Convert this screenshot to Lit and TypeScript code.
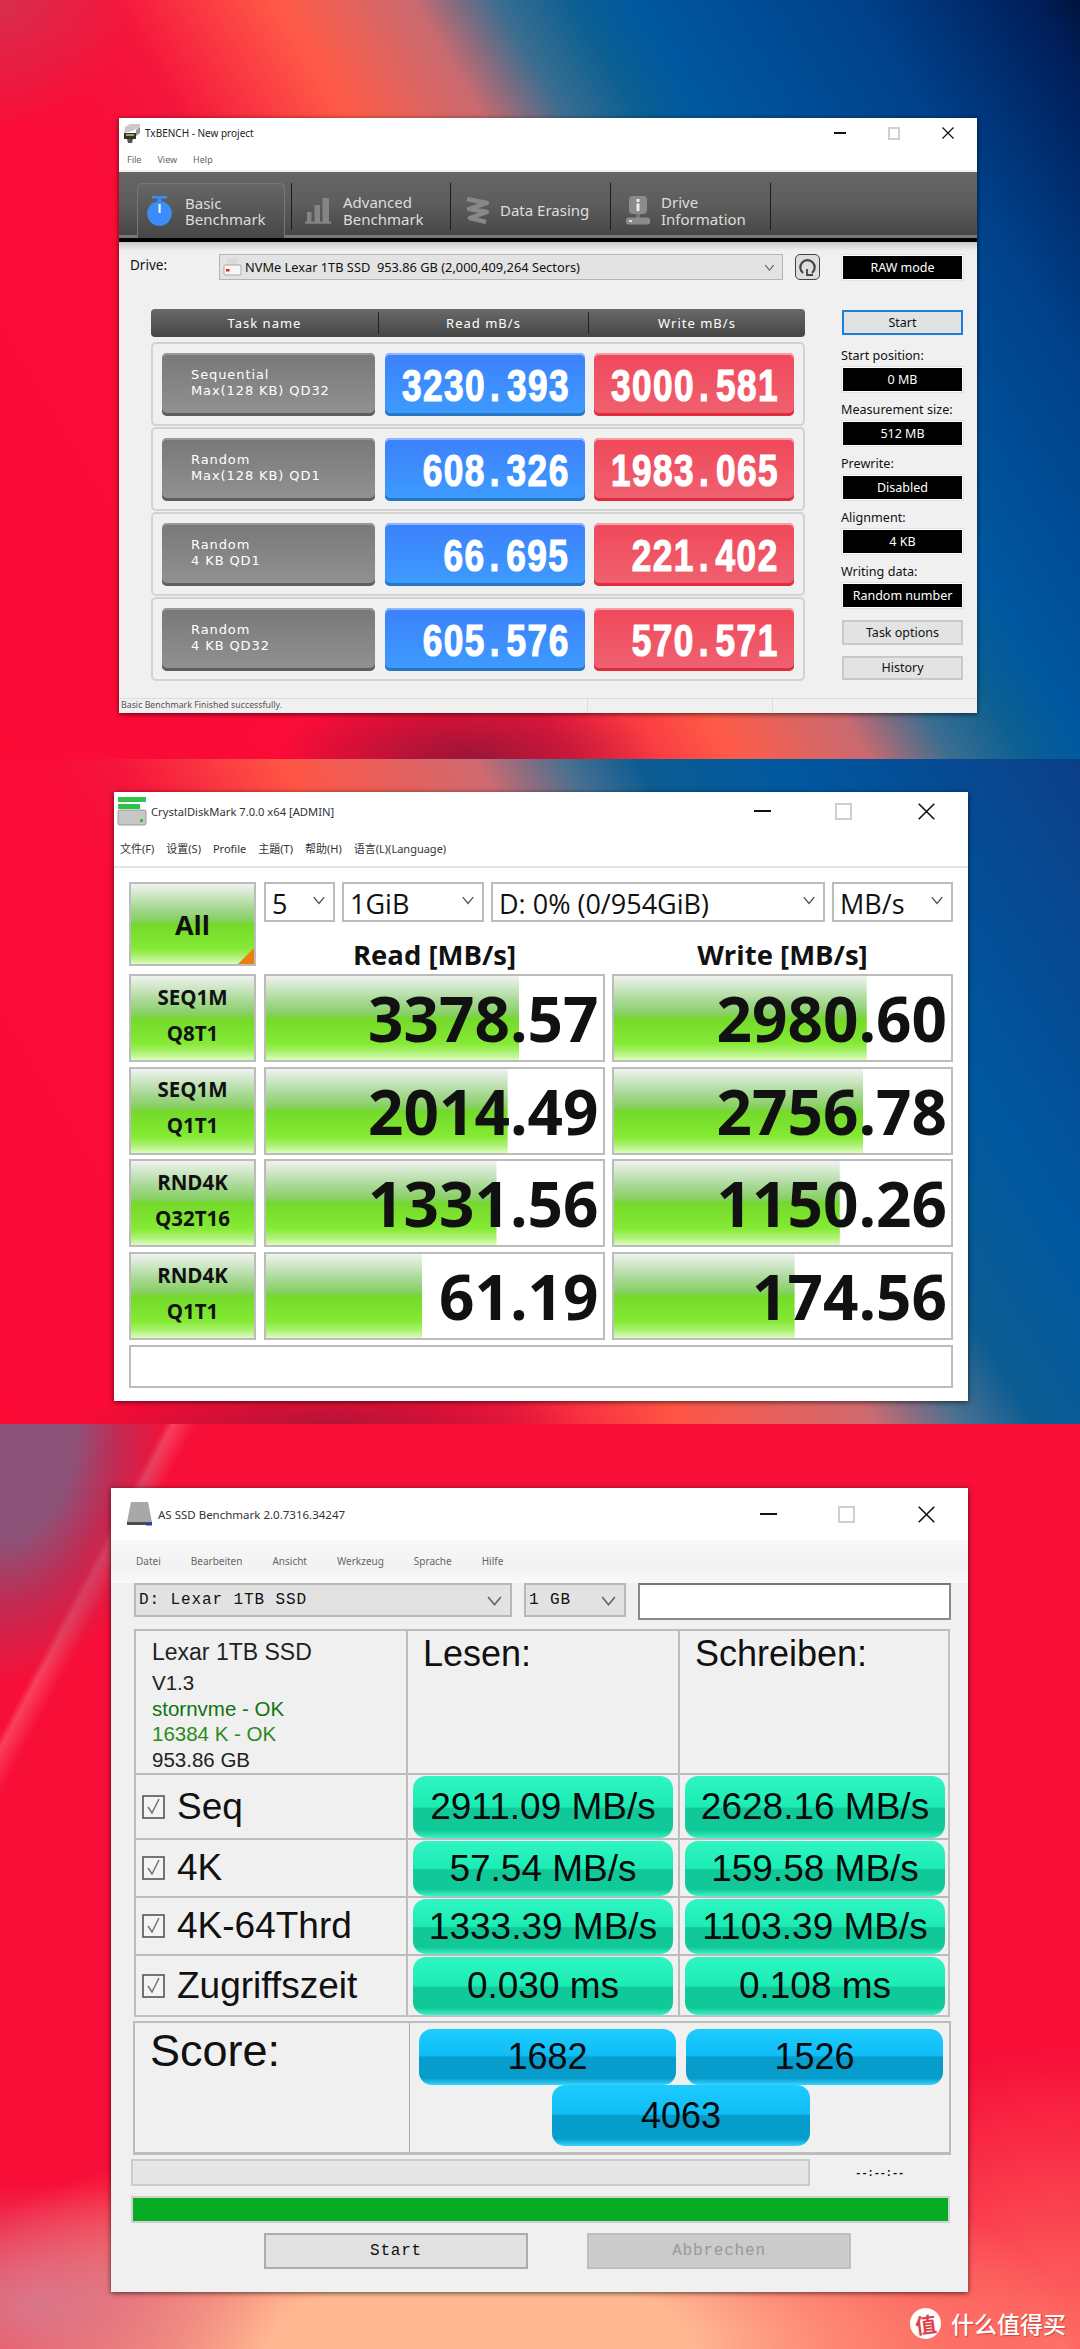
import { LitElement, html, css } from "lit";
import { customElement } from "lit/decorators.js";

const winBtns = (s: number, sw = 1.4) => html`<svg width=${s} height=${s} viewBox="0 0 12 12"><path d="M0.5 .5L11.5 11.5M11.5 .5L.5 11.5" stroke="#111" stroke-width=${sw} fill="none"/></svg>`;
const chevron = (w = 12, c = "#555") => html`<svg class="chev" width=${w} height=${w} viewBox="0 0 12 12"><path d="M1.5 3.5L6 9L10.5 3.5" stroke=${c} stroke-width="1.2" fill="none"/></svg>`;

const txRows = [
  ["Sequential", "Max(128 KB) QD32", "3230", "393", "3000", "581"],
  ["Random", "Max(128 KB) QD1", "608", "326", "1983", "065"],
  ["Random", "4 KB QD1", "66", "695", "221", "402"],
  ["Random", "4 KB QD32", "605", "576", "570", "571"],
];
const txSide = [
  ["Start position:", "0 MB"],
  ["Measurement size:", "512 MB"],
  ["Prewrite:", "Disabled"],
  ["Alignment:", "4 KB"],
  ["Writing data:", "Random number"],
];
const cdmRows = [
  ["SEQ1M", "Q8T1", "3378.57", 75.2, "2980.60", 75.0],
  ["SEQ1M", "Q1T1", "2014.49", 71.7, "2756.78", 74.0],
  ["RND4K", "Q32T16", "1331.56", 68.4, "1150.26", 67.0],
  ["RND4K", "Q1T1", "61.19", 46.3, "174.56", 53.6],
] as const;
const asRows = [
  ["Seq", "2911.09 MB/s", "2628.16 MB/s"],
  ["4K", "57.54 MB/s", "159.58 MB/s"],
  ["4K-64Thrd", "1333.39 MB/s", "1103.39 MB/s"],
  ["Zugriffszeit", "0.030 ms", "0.108 ms"],
];

@customElement("app-root")
export class AppRoot extends LitElement {
  static styles = css`
    :host { display: block; width: 1080px; height: 2349px; overflow: hidden; position: relative; font-family: "Liberation Sans", Arial, sans-serif; color: #111; }
    * { box-sizing: border-box; }
    svg { display: block; flex: none; }
    .sec { width: 1080px; }
    .s1 { height: 759px; padding: 118px 0 0 119px;
      background:
        radial-gradient(ellipse 130px 130px at 0 0, rgba(185,75,95,.55), transparent),
        radial-gradient(ellipse 190px 70px at 470px 759px, rgba(120,25,55,.75), transparent),
        linear-gradient(59deg, #fb0a36 0%, #f90d38 30%, #f5163c 37%, #ff5c48 48%, #c86a70 56.6%, #3a6e90 62%, #0a5f92 67%, #0058a0 71%, #00418a 85.7%, #001e5a 97%, #00143c 100%); }
    .s2 { height: 665px; padding: 33px 0 0 114px;
      background:
        radial-gradient(ellipse 260px 40px at 330px 665px, rgba(130,25,55,.6), transparent),
        linear-gradient(59deg, #fb0a36 0%, #f90d38 30%, #f5163c 35%, #ff5545 46%, #cf6a70 59%, #4a7090 65%, #0b5c92 70%, #0058a0 80%, #0b3f88 100%); }
    .s3 { height: 925px; padding: 64px 0 0 111px;
      background:
        radial-gradient(ellipse 170px 260px at 0px 0px, #8d5278 45%, rgba(160,60,100,.6) 70%, transparent 100%),
        radial-gradient(ellipse 240px 120px at 40px 880px, rgba(215,120,140,.95), transparent),
        radial-gradient(ellipse 600px 230px at 480px 925px, #ffb892 35%, rgba(255,160,125,.7) 65%, transparent 100%),
        radial-gradient(ellipse 300px 300px at 1060px 925px, rgba(255,120,105,.9), transparent),
        linear-gradient(118deg, transparent 10.5%, rgba(255,190,190,.28) 11%, transparent 12.5%),
        #f70f38; }
    .win { background: #fff; box-shadow: 0 1px 5px rgba(0,0,0,.65); display: flex; flex-direction: column; overflow: hidden; }
    .ctrl { margin-left: auto; display: flex; align-items: center; flex: none; }
    .min { height: 2px; background: #111; flex: none; }
    .max { border: 2px solid #d0d0d0; background: #fff; flex: none; }

    /* TxBENCH */
    .tx { width: 858px; height: 595px; }
    .tx .title { height: 30px; display: flex; align-items: center; padding-left: 4px; gap: 4px; font: 10px "Noto Sans", sans-serif; color: #222; }
    .tx .ctrl { padding-right: 23px; }
    .tx .min { width: 12px; margin-right: 42px; }
    .tx .max { width: 12px; height: 13px; margin-right: 42px; }
    .tx .menu { height: 22px; display: flex; align-items: center; padding-left: 8px; gap: 16px; font: 9px "Noto Sans", sans-serif; color: #666; }
    .tx .toolbar { margin-top: 2px; height: 70px; flex: none; display: flex; align-items: flex-end; padding: 0 0 0 18px; background: linear-gradient(#666 0%, #5c5c5c 50%, #474747 96%, #777 96%); border-bottom: 4px solid #000; box-shadow: 0 -2px 0 #eee; }
    .tab { height: 55px; display: flex; align-items: center; color: #ddd; font: 15px/16.5px "Noto Sans", sans-serif; }
    .tab.on { width: 148px; padding-left: 9px; gap: 13px; background: linear-gradient(#666, #474747); border: 1px solid #777; border-bottom: 0; border-radius: 5px 5px 0 0; }
    .tab.t2 { width: 158px; padding-left: 13px; gap: 12px; }
    .tab.t3 { width: 159px; padding-left: 14px; gap: 10px; }
    .tab.t4 { width: 159px; padding-left: 15px; gap: 11px; }
    .sep { width: 1px; height: 47px; background: #1c1c1c; margin-bottom: 8px; flex: none; }
    .sep.first { margin-left: 6px; }
    .body { flex: 1; background: linear-gradient(#c9c9c9 0, #f0f0f0 9px); display: flex; flex-direction: column; }
    .driverow { margin-top: 12px; height: 26px; display: flex; align-items: center; padding-left: 11px; }
    .driverow .lab { width: 89px; font: 13.5px "Noto Sans", sans-serif; margin-top: -4px; }
    .combo { width: 564px; height: 26px; background: #e3e3e3; border: 1px solid #b5b5b5; display: flex; align-items: center; padding: 0 7px 0 3px; gap: 3px; font: 12.8px "Noto Sans", sans-serif; white-space: pre; }
    .combo .chev { margin-left: auto; }
    .refresh { width: 25px; height: 26px; margin-left: 12px; margin-right: 22px; border: 1px solid #444; border-radius: 5px; background: #ddd; display: flex; align-items: center; justify-content: center; }
    .black { background: #000; color: #fff; height: 25px; border: 1px solid #fff; outline: 1px solid #e2e2e2; display: flex; align-items: center; justify-content: center; font: 12.5px "Noto Sans", sans-serif; width: 121px; }
    .main { margin-top: 29px; padding-left: 32px; display: flex; gap: 37px; }
    .left { width: 654px; }
    .head { height: 28px; border-radius: 4px; background: linear-gradient(#6a6a6a, #454545); display: grid; grid-template-columns: 227px 210px 217px; color: #fff; font: 13px "Noto Sans", sans-serif; letter-spacing: 1px; margin-bottom: 5px; }
    .head div { display: flex; align-items: center; justify-content: center; position: relative; }
    .head div + div { border-left: 1px solid #222; margin: 3px 0; }
    .row { height: 84px; margin-bottom: 1px; border: 2px solid #d2d2d2; border-radius: 5px; padding: 9px 9px 8px; display: grid; grid-template-columns: 213px 200px 200px; gap: 0 9.5px; }
    .tname { border-radius: 5px; background: linear-gradient(#787878, #929292); box-shadow: inset 0 2px 0 #999, inset 0 -3px 0 #5e5e5e; color: #fff; display: flex; flex-direction: column; justify-content: center; padding: 0 0 4px 29px; font: 13px/15.2px "DejaVu Sans", sans-serif; letter-spacing: .9px; white-space: nowrap; }
    .val { border-radius: 5px; color: #fff; display: flex; align-items: center; justify-content: flex-end; padding: 2px 16px 0 0; font: bold 44px "Liberation Sans", sans-serif; }
    .val b { display: block; font-weight: inherit; transform: scaleX(.8); transform-origin: right center; letter-spacing: 1.8px; -webkit-text-stroke: 1.2px #fff; white-space: nowrap; margin-right: -1px; }
    .val b span { padding: 0 7px 0 5px; }
    .val.b { background: linear-gradient(#3d80fb, #3d9cff); box-shadow: inset 0 2px 0 #8cb6ff, inset 0 -3px 0 #2a74c4; }
    .val.r { background: linear-gradient(#f0485a, #ef6270); box-shadow: inset 0 2px 0 #f6a0a6, inset 0 -3px 0 #e02c3c; }
    .side { width: 121px; display: flex; flex-direction: column; }
    .startbtn { height: 25px; margin: 1px 0 3px; border: 2px solid #1a80d8; background: #e2e2e2; display: flex; align-items: center; justify-content: center; font: 12.5px "Noto Sans", sans-serif; }
    .slab { height: 29px; margin-left: -1px; display: flex; align-items: flex-end; padding-bottom: 3px; font: 12.6px "Noto Sans", sans-serif; color: #111; white-space: nowrap; }
    .sbtn { height: 24.5px; margin-top: 12px; border: 2px solid #c9c9c9; background: #e3e3e3; display: flex; align-items: center; justify-content: center; font: 12.5px "Noto Sans", sans-serif; }
    .sbtn + .sbtn { margin-top: 11px; }
    .status { margin-top: auto; height: 15px; border-top: 1px solid #ddd; display: grid; grid-template-columns: 468px 185px 1fr; font: 8.8px "Noto Sans", sans-serif; color: #555; }
    .status div { padding-left: 2px; white-space: nowrap; }
    .status div + div { border-left: 1px solid #ddd; }

    /* CrystalDiskMark */
    .cdm { width: 854px; height: 609px; }
    .cdm .title { height: 38px; display: flex; align-items: center; padding-left: 3px; gap: 4px; font: 11.2px "Noto Sans", sans-serif; color: #333; }
    .cdm .ctrl { padding-right: 33px; }
    .cdm .min { width: 17px; margin-right: 64px; }
    .cdm .max { width: 17px; height: 17px; margin-right: 66px; }
    .cdm .menu { height: 38px; display: flex; align-items: center; padding-left: 6px; gap: 12px; font: 11px "Noto Sans", "Noto Sans CJK SC", sans-serif; color: #333; border-bottom: 2px solid #e4e4e4; }
    .grid { padding: 14px 15px 0; display: flex; flex-direction: column; gap: 7.67px; }
    .top { display: flex; height: 84.4px; gap: 8px; }
    .grn { background: linear-gradient(#f0f3f0 0, #a6d893 30%, #86cf60 46%, #74d92a 50%, #84ea33 80%, #a8f06c 90%, #dcfcc0 100%); border: 2px solid #bcbcbc; }
    .all { width: 127px; position: relative; display: flex; align-items: center; justify-content: center; font: bold 27px "Open Sans", sans-serif; }
    .all::after { content: ""; position: absolute; right: 0; bottom: 0; border-style: solid; border-width: 0 0 16px 16px; border-color: transparent transparent #f07d10 transparent; }
    .ctl { width: 689px; }
    .combos { display: flex; gap: 7px; height: 40px; }
    .cb { border: 2px solid #bcbcbc; background: #fff; font: 27px "Open Sans", sans-serif; display: flex; align-items: center; justify-content: space-between; padding: 2px 7px 0 6px; }
    .cb .chev { margin-top: -6px; }
    .heads { display: grid; grid-template-columns: 341px 341px; gap: 7px; height: 45px; align-items: flex-end; text-align: center; font: bold 27.5px/24px "Open Sans", sans-serif; }
    .crow { display: grid; grid-template-columns: 127px 341px 341px; gap: 7.5px; height: 85px; }
    .tag { display: flex; flex-direction: column; align-items: center; justify-content: center; padding-bottom: 7px; font: bold 20.5px/36px "Open Sans", sans-serif; }
    .num { border: 2px solid #bcbcbc; background-color: #fff; background-image: linear-gradient(#f0f3f0 0, #a6d893 30%, #86cf60 46%, #74d92a 50%, #84ea33 80%, #a8f06c 90%, #dcfcc0 100%); background-repeat: no-repeat; background-origin: padding-box; display: flex; align-items: center; justify-content: flex-end; padding: 0 4px 0 0; font: bold 62px "Open Sans", sans-serif; }
    .note { height: 43px; border: 2px solid #bcbcbc; background: #fff; }

    /* AS SSD */
    .as { width: 857px; height: 804px; background: #f0f0f0; }
    .as .title { height: 52px; background: #fff; display: flex; align-items: center; padding-left: 15px; gap: 5px; font: 11.5px "Noto Sans", sans-serif; color: #333; flex: none; }
    .as .ctrl { padding-right: 33px; }
    .as .min { width: 17px; margin-right: 61px; }
    .as .max { width: 17px; height: 17px; margin-right: 63px; }
    .as .menu { height: 43px; flex: none; background: linear-gradient(#f8f8f8, #f2f2f2 70%, #fafafa); display: flex; padding: 14px 0 0 25px; gap: 30px; font: 10px "Noto Sans", sans-serif; color: #666; }
    .tools { display: flex; gap: 12px; padding-left: 23px; height: 37px; }
    .drop { height: 34px; background: #e2e2e2; border: 2px solid #b8b8b8; display: flex; align-items: center; justify-content: space-between; padding: 0 7px 0 3px; font: 16px "Liberation Mono", monospace; letter-spacing: .9px; white-space: pre; }
    .d1 { width: 378px; }
    .d2 { width: 102px; }
    .inp { width: 313px; height: 37px; background: #fff; border: 2px solid #8a8a8a; border-top-color: #777; }
    .tbl { margin: 9px 0 0 23px; width: 816px; display: grid; grid-template-columns: 272px 272px 272px; grid-template-rows: 144px 65px 58px 58px 61px; border-right: 2px solid #c2c2c2; border-bottom: 2px solid #c2c2c2; }
    .c { border-top: 2px solid #bcbcbc; border-left: 2px solid #bcbcbc; min-width: 0; }
    .info { padding: 6px 0 0 16px; font: 20.5px/25.5px "Liberation Sans", sans-serif; color: #222; }
    .info .nm { font-size: 23px; line-height: 30px; letter-spacing: 0; margin-bottom: 3px; }
    .g1 { color: #0f7410; }
    .g2 { color: #2c8a1a; }
    .hd { font: 36px "Liberation Sans", sans-serif; padding: 2px 0 0 15px; }
    .chk { display: flex; align-items: center; padding-left: 6px; gap: 12px; font: 37px "Liberation Sans", sans-serif; white-space: nowrap; }
    .pc { padding: 1px 5px 0; display: flex; }
    .pill { flex: 1; display: flex; align-items: center; justify-content: center; border-radius: 13px; font: 37px "Liberation Sans", sans-serif; color: #0a0a0a; }
    .pill.g { background: linear-gradient(#2ff5c2 0, #1cecb4 50%, #11c998 52%, #11c998 88%, #3af2c8 100%); }
    .pill.bl { height: 56px; background: linear-gradient(#1cccff 0, #10bcf5 48%, #069dcc 50%, #069dcc 88%, #3ad4ff 100%); font-size: 36px; }
    .score { margin: 4px 0 0 22px; width: 818px; height: 134px; border: 2px solid #bcbcbc; border-bottom-width: 3px; display: grid; grid-template-columns: 275px 1fr; }
    .score .sl { font: 45px "Liberation Sans", sans-serif; padding: 2px 0 0 15px; border-right: 1.5px solid #aaa; }
    .pills { padding: 6px 7px 0 9px; display: grid; grid-template-columns: 257px 257px; column-gap: 10px; align-content: start; }
    .pills .tot { grid-column: 1 / -1; justify-self: center; width: 258px; height: 61px; }
    .prog { margin: 4px 0 0 20px; display: flex; align-items: center; }
    .bar1 { width: 679px; height: 27px; background: #e6e6e6; border: 2px solid #cbcbcb; }
    .time { width: 139px; text-align: center; font: bold 11px "Liberation Mono", monospace; letter-spacing: -.5px; }
    .bar2 { margin: 10px 0 0 20px; width: 819px; height: 27px; background: #07ac25; border: 2px solid #d0d0d0; }
    .btns { margin: 10px 0 0 153px; display: flex; gap: 59px; }
    .btn { width: 264px; height: 36px; display: flex; align-items: center; justify-content: center; font: 16px "Liberation Mono", monospace; letter-spacing: .8px; }
    .btn.a { background: #e1e1e1; border: 2px solid #adadad; color: #111; }
    .btn.d { background: #cbcbcb; border: 2px solid #bfbfbf; color: #999; }

    .mark { position: absolute; left: 910px; top: 2306px; display: flex; align-items: center; gap: 10px; color: #fff; font: 500 23px "Noto Sans CJK SC", sans-serif; text-shadow: 1px 1px 1px rgba(120,30,30,.45); }
    .mark i { width: 31px; height: 31px; border-radius: 50%; background: #fff; color: #e0404a; display: flex; align-items: center; justify-content: center; font: 700 21px "Noto Sans CJK SC", sans-serif; text-shadow: none; transform: rotate(-8deg); }
  `;

  private txIcons() {
    return {
      watch: html`<svg width="25" height="31" viewBox="0 0 25 31"><rect x="5" y="0" width="15" height="2.5" fill="#3b8dfb"/><path d="M10.5 2.5h4v3h-4z" fill="#3b8dfb"/><circle cx="12.5" cy="17.5" r="12.3" fill="#3b8dfb"/><rect x="11.5" y="8" width="2.2" height="9" fill="#e6f0ff"/></svg>`,
      bars: html`<svg width="26" height="27" viewBox="0 0 26 27"><g fill="#858585"><rect x="2" y="15" width="4.5" height="10"/><rect x="9.5" y="8" width="5.5" height="17"/><rect x="17.5" y="1" width="6.5" height="24"/><rect x="0" y="24.5" width="26" height="2.2"/></g></svg>`,
      erase: html`<svg width="25" height="27" viewBox="0 0 25 27"><path d="M2 2L22 6L4 12L22 15L5 21L21 25" stroke="#888" stroke-width="4.4" fill="none" stroke-linejoin="round"/></svg>`,
      info: html`<svg width="24" height="29" viewBox="0 0 24 29"><rect x="3" y="0" width="18" height="18" rx="4" fill="#8b8b8b"/><rect x="10.5" y="3" width="3" height="3" fill="#eee"/><rect x="10.5" y="7.5" width="3" height="7.5" fill="#eee"/><rect x="10" y="18" width="4" height="4" fill="#777"/><rect x="0" y="21.5" width="24" height="7" rx="2.5" fill="#8b8b8b"/><rect x="3" y="24" width="3" height="2" fill="#ddd"/></svg>`,
    };
  }

  private tx() {
    const ic = this.txIcons();
    return html`<div class="win tx">
      <div class="title">
        <svg width="18" height="19" viewBox="0 0 18 19"><path d="M1 9L9 7L17 3V0H7L2 3z" fill="#c9c9c9"/><path d="M1 9h12v6h-12z" fill="#333"/><rect x="3" y="10" width="8" height="2" fill="#b5a030"/><path d="M4 15h6l-1 4H5z" fill="#555"/><path d="M13 6l4-3v6l-4 3z" fill="#999"/></svg>
        <span>TxBENCH - New project</span>
        <div class="ctrl"><div class="min"></div><div class="max"></div>${winBtns(12, 1.2)}</div>
      </div>
      <div class="menu"><span>File</span><span>View</span><span>Help</span></div>
      <div class="toolbar">
        <div class="tab on">${ic.watch}<div>Basic<br />Benchmark</div></div>
        <div class="sep first"></div>
        <div class="tab t2">${ic.bars}<div>Advanced<br />Benchmark</div></div>
        <div class="sep"></div>
        <div class="tab t3">${ic.erase}<div>Data Erasing</div></div>
        <div class="sep"></div>
        <div class="tab t4">${ic.info}<div>Drive<br />Information</div></div>
        <div class="sep"></div>
      </div>
      <div class="body">
        <div class="driverow">
          <div class="lab">Drive:</div>
          <div class="combo">
            <svg width="19" height="18" viewBox="0 0 19 18"><path d="M4 0h11v7H4z" fill="#dadada"/><rect x="1" y="7" width="17" height="10" rx="1" fill="#f6f6f6" stroke="#999" stroke-width=".8"/><rect x="3" y="11" width="3.5" height="2.5" fill="#d22"/></svg>
            <span>NVMe Lexar 1TB SSD  953.86 GB (2,000,409,264 Sectors)</span>${chevron(11)}
          </div>
          <div class="refresh"><svg width="19" height="20" viewBox="0 0 19 20"><path d="M5 16A7.2 7.2 0 1 1 14 16" stroke="#444" stroke-width="2.2" fill="none"/><path d="M9 12v6h6" stroke="#444" stroke-width="1.8" fill="none"/></svg></div>
          <div class="black">RAW mode</div>
        </div>
        <div class="main">
          <div class="left">
            <div class="head"><div>Task name</div><div>Read mB/s</div><div>Write mB/s</div></div>
            ${txRows.map((r) => html`<div class="row">
              <div class="tname"><div>${r[0]}</div><div>${r[1]}</div></div>
              <div class="val b"><b>${r[2]}<span>.</span>${r[3]}</b></div>
              <div class="val r"><b>${r[4]}<span>.</span>${r[5]}</b></div>
            </div>`)}
          </div>
          <div class="side">
            <div class="startbtn">Start</div>
            ${txSide.map((s) => html`<div class="slab">${s[0]}</div><div class="black">${s[1]}</div>`)}
            <div class="sbtn">Task options</div>
            <div class="sbtn">History</div>
          </div>
        </div>
        <div class="status"><div>Basic Benchmark Finished successfully.</div><div></div><div></div></div>
      </div>
    </div>`;
  }

  private cdm() {
    const cell = (v: string, w: number) => html`<div class="num" style="background-size:${w}% 100%">${v}</div>`;
    return html`<div class="win cdm">
      <div class="title">
        <svg width="30" height="30" viewBox="0 0 30 30"><rect x="1" y="1" width="28" height="5" fill="#2fc24a"/><rect x="1" y="8" width="22" height="5" fill="#2fc24a"/><rect x="1" y="14" width="28" height="15" rx="2" fill="#c7c7c7" stroke="#888" stroke-width=".8"/><rect x="23" y="23" width="3" height="3" fill="#2fc24a"/></svg>
        <span>CrystalDiskMark 7.0.0 x64 [ADMIN]</span>
        <div class="ctrl"><div class="min"></div><div class="max"></div>${winBtns(17, 1.1)}</div>
      </div>
      <div class="menu"><span>文件(F)</span><span>设置(S)</span><span>Profile</span><span>主題(T)</span><span>帮助(H)</span><span>语言(L)(Language)</span></div>
      <div class="grid">
        <div class="top">
          <div class="grn all">All</div>
          <div class="ctl">
            <div class="combos">
              <div class="cb" style="width:71px"><span>5</span>${chevron(14)}</div>
              <div class="cb" style="width:142px"><span>1GiB</span>${chevron(14)}</div>
              <div class="cb" style="width:334px"><span>D: 0% (0/954GiB)</span>${chevron(14)}</div>
              <div class="cb" style="width:121px"><span>MB/s</span>${chevron(14)}</div>
            </div>
            <div class="heads"><div>Read [MB/s]</div><div>Write [MB/s]</div></div>
          </div>
        </div>
        ${cdmRows.map((r) => html`<div class="crow">
          <div class="grn tag"><div>${r[0]}</div><div>${r[1]}</div></div>
          ${cell(r[2], r[3])}${cell(r[4], r[5])}
        </div>`)}
        <div class="note"></div>
      </div>
    </div>`;
  }

  private as() {
    const box = html`<svg width="23" height="24" viewBox="0 0 23 24"><rect x="1" y="1" width="21" height="22" fill="#f4f4f4" stroke="#555" stroke-width="1.6"/><path d="M6 12l4 6L17 4" stroke="#777" stroke-width="1.6" fill="none"/></svg>`;
    return html`<div class="win as">
      <div class="title">
        <svg width="27" height="24" viewBox="0 0 27 24"><path d="M5 0h17l4 20H1z" fill="#a8a8a8"/><path d="M1 20h25v3H1z" fill="#4a4a55"/><rect x="20" y="21" width="6" height="2.5" fill="#2b3fb0"/></svg>
        <span>AS SSD Benchmark 2.0.7316.34247</span>
        <div class="ctrl"><div class="min"></div><div class="max"></div>${winBtns(17, 1.1)}</div>
      </div>
      <div class="menu"><span>Datei</span><span>Bearbeiten</span><span>Ansicht</span><span>Werkzeug</span><span>Sprache</span><span>Hilfe</span></div>
      <div class="tools">
        <div class="drop d1"><span>D: Lexar 1TB SSD</span>${chevron(17, "#666")}</div>
        <div class="drop d2"><span>1 GB</span>${chevron(17, "#666")}</div>
        <div class="inp"></div>
      </div>
      <div class="tbl">
        <div class="c info">
          <div class="nm">Lexar 1TB SSD</div><div>V1.3</div><div class="g1">stornvme - OK</div><div class="g2">16384 K - OK</div><div>953.86 GB</div>
        </div>
        <div class="c hd">Lesen:</div>
        <div class="c hd">Schreiben:</div>
        ${asRows.map((r) => html`
          <div class="c chk">${box}<span>${r[0]}</span></div>
          <div class="c pc"><div class="pill g">${r[1]}</div></div>
          <div class="c pc"><div class="pill g">${r[2]}</div></div>
        `)}
      </div>
      <div class="score">
        <div class="sl">Score:</div>
        <div class="pills">
          <div class="pill bl">1682</div><div class="pill bl">1526</div>
          <div class="pill bl tot">4063</div>
        </div>
      </div>
      <div class="prog"><div class="bar1"></div><div class="time">--:--:--</div></div>
      <div class="bar2"></div>
      <div class="btns"><div class="btn a">Start</div><div class="btn d">Abbrechen</div></div>
    </div>`;
  }

  render() {
    return html`
      <section class="sec s1">${this.tx()}</section>
      <section class="sec s2">${this.cdm()}</section>
      <section class="sec s3">${this.as()}</section>
      <div class="mark"><i>值</i><span>什么值得买</span></div>
    `;
  }
}
